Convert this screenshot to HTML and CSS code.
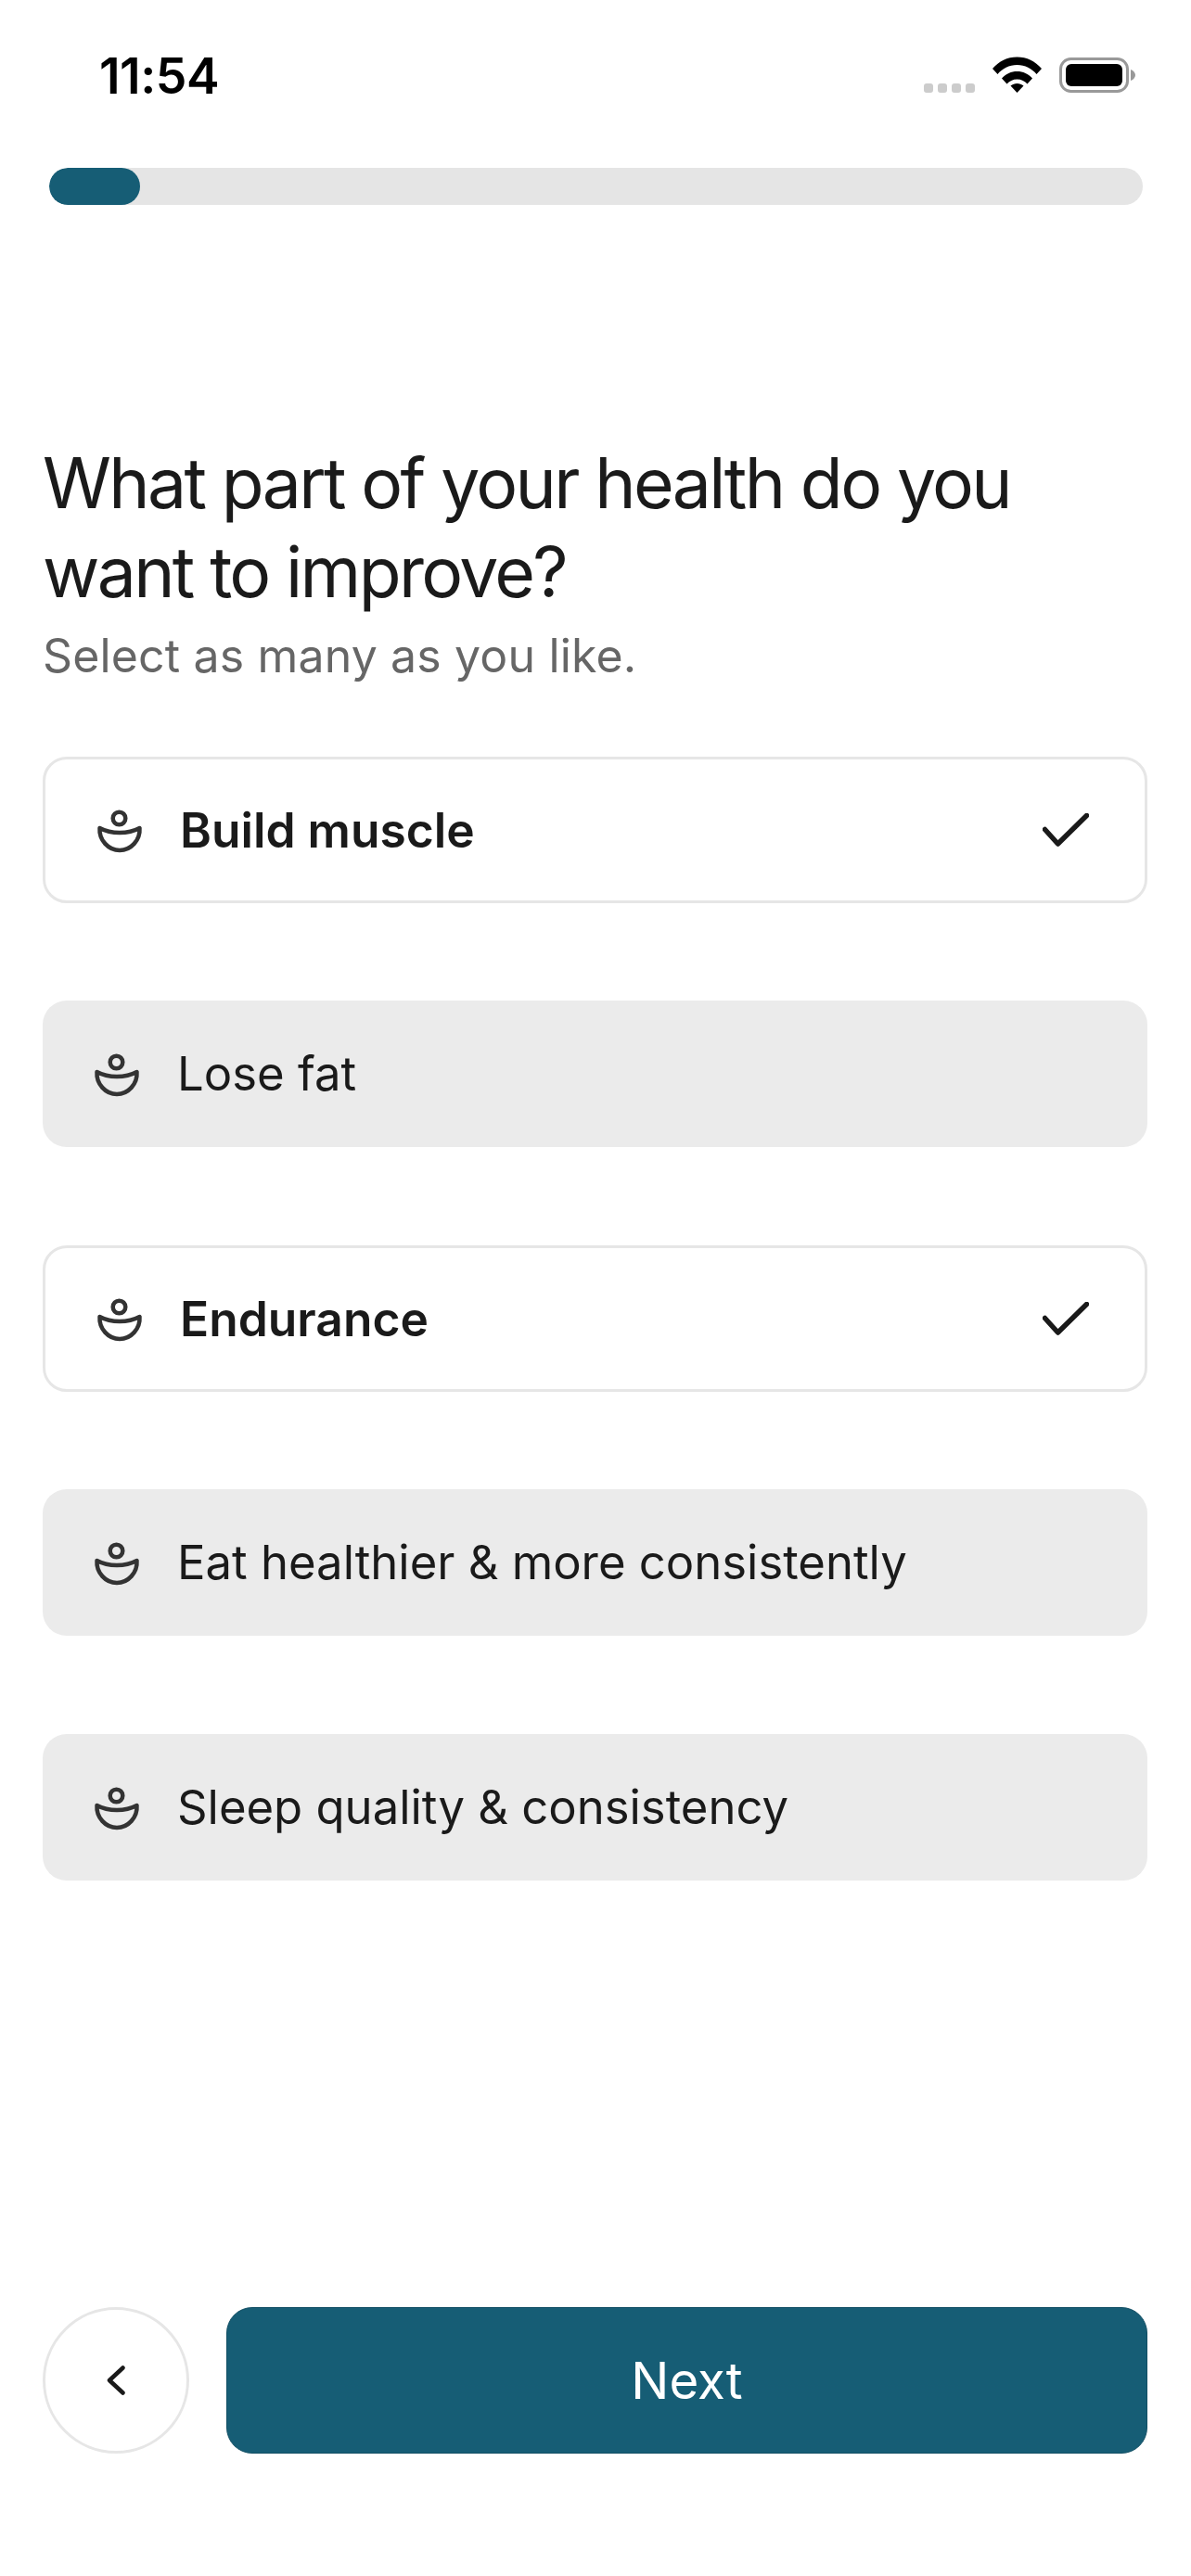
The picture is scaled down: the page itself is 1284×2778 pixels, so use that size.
FILE: index.html
```html
<!DOCTYPE html>
<html lang="en">
<head>
<meta charset="utf-8">
<title>Health goals</title>
<link rel="stylesheet" href="styles.css">
</head>
<body>
<main class="screen">
  <header class="status">
    <span class="time">11:54</span>
    <div class="status-icons">
      <div class="dots"><i></i><i></i><i></i><i></i></div>
      <svg class="wifi" viewBox="0 0 53 39"><path d="M0 13C7 5 16 .5 26.500 .5S46 5 53 13L47.500 19C42.500 13 35 9 26.500 9S10.500 13 5.500 19Z"/><path d="M10 23.500C14.500 18.500 20 16 26.500 16S38.500 18.500 43 23.500L37.500 29.500C35 26.500 31 24.500 26.500 24.500S18 26.500 15.500 29.500Z"/><path d="M19.500 31.500C21.500 30 24 29 26.500 29S31.500 30 33.500 31.500L26.500 39Z"/></svg>
      <svg class="battery" viewBox="0 0 82 38"><rect x="1.500" y="1.500" width="72" height="35" rx="11" fill="none" stroke="#999" stroke-width="3"/><rect x="7" y="7" width="61" height="24" rx="6" fill="#000"/><path d="M77 13C80 14 82 16.500 82 19S80 24 77 25Z" fill="#999"/></svg>
    </div>
  </header>

  <div class="progress"><div class="progress-fill"></div></div>

  <h1 class="title">What part of your health do you want to improve?</h1>
  <p class="subtitle">Select as many as you like.</p>

  <ul class="options">
    <li class="option selected">
      <svg class="opt-icon" viewBox="0 0 50 50"><circle cx="24.500" cy="12.500" r="6.800"/><path d="M3.500 23C10 26.500 17 28 25 28S40 26.500 46.500 23C47.500 36 37 47 25 47S2.500 36 3.500 23Z"/></svg>
      <span class="opt-label">Build muscle</span>
      <svg class="check" viewBox="0 0 50 36"><path d="M2.500 17.500L16.500 33L47.500 2.500"/></svg>
    </li>
    <li class="option">
      <svg class="opt-icon" viewBox="0 0 50 50"><circle cx="24.500" cy="12.500" r="6.800"/><path d="M3.500 23C10 26.500 17 28 25 28S40 26.500 46.500 23C47.500 36 37 47 25 47S2.500 36 3.500 23Z"/></svg>
      <span class="opt-label">Lose fat</span>
    </li>
    <li class="option selected">
      <svg class="opt-icon" viewBox="0 0 50 50"><circle cx="24.500" cy="12.500" r="6.800"/><path d="M3.500 23C10 26.500 17 28 25 28S40 26.500 46.500 23C47.500 36 37 47 25 47S2.500 36 3.500 23Z"/></svg>
      <span class="opt-label">Endurance</span>
      <svg class="check" viewBox="0 0 50 36"><path d="M2.500 17.500L16.500 33L47.500 2.500"/></svg>
    </li>
    <li class="option">
      <svg class="opt-icon" viewBox="0 0 50 50"><circle cx="24.500" cy="12.500" r="6.800"/><path d="M3.500 23C10 26.500 17 28 25 28S40 26.500 46.500 23C47.500 36 37 47 25 47S2.500 36 3.500 23Z"/></svg>
      <span class="opt-label">Eat healthier &amp; more consistently</span>
    </li>
    <li class="option">
      <svg class="opt-icon" viewBox="0 0 50 50"><circle cx="24.500" cy="12.500" r="6.800"/><path d="M3.500 23C10 26.500 17 28 25 28S40 26.500 46.500 23C47.500 36 37 47 25 47S2.500 36 3.500 23Z"/></svg>
      <span class="opt-label">Sleep quality &amp; consistency</span>
    </li>
  </ul>

  <footer class="actions">
    <button class="back" type="button" aria-label="Back"><svg class="chevron" viewBox="0 0 20 32"><path d="M17.500 2.500L3 16L17.500 29.500"/></svg></button>
    <button class="next" type="button">Next</button>
  </footer>
</main>
</body>
</html>
```

FILE: styles.css
```css
* { box-sizing: border-box; }
html, body { margin: 0; padding: 0; background: #fff; }
body { font-family: Inter, "Liberation Sans", sans-serif; color: #1a1a1a; }

.screen {
  width: 1284px;
  height: 2778px;
  padding: 0 47px 132px 46px;
  display: flex;
  flex-direction: column;
  overflow: hidden;
}

.status {
  height: 181px;
  flex: none;
  display: flex;
  align-items: flex-start;
  justify-content: space-between;
  padding: 61px 13px 0 61px;
}
.time { font-family: Inter, sans-serif; font-size: 53.500px; line-height: 42px; font-weight: 600; color: #000; letter-spacing: -0.5px; }
.status-icons { display: flex; align-items: flex-start; }
.dots { display: flex; gap: 5px; margin: 29px 19px 0 0; }
.dots i { width: 10px; height: 10px; border-radius: 3px; background: #ccc; }
.wifi { width: 53px; height: 39px; fill: #000; margin-right: 19px; }
.battery { width: 82px; height: 38px; margin-top: 1px; }

.progress { height: 40px; flex: none; margin: 0 5px 0 7px; background: #e5e5e5; border-radius: 20px; overflow: hidden; }
.progress-fill { width: 98px; height: 100%; background: #165d75; border-radius: 20px; }

.title { margin: 252px 0 0; font-size: 75px; line-height: 96px; font-weight: 400; letter-spacing: -2.65px; color: #1a1a1a; }
.subtitle { margin: 12px 0 0; font-size: 50px; line-height: 60px; letter-spacing: 0.15px; color: #666; }

.options { list-style: none; margin: 79px 0 0; padding: 0; display: flex; flex-direction: column; gap: 105.400px; }
.option {
  height: 158px;
  display: flex;
  align-items: center;
  padding: 0 60px 0 55px;
  background: #ebebeb;
  border-radius: 26px;
}
.option.selected { background: #fff; border: 3px solid #e6e6e6; }
.opt-icon { width: 50px; height: 50px; flex: none; fill: none; stroke: #333; stroke-width: 4.500; stroke-linejoin: round; margin-right: 40px; }
.opt-label { font-size: 50.800px; line-height: 60px; }
.selected .opt-label { font-size: 51.500px; font-weight: 600; }
.check { width: 50px; height: 36px; margin-left: auto; fill: none; stroke: #1a1a1a; stroke-width: 5.500; stroke-linecap: round; stroke-linejoin: round; }

.actions { margin-top: auto; display: flex; gap: 40px; }
.back {
  width: 158px; height: 158px; flex: none; padding: 0;
  display: flex; align-items: center; justify-content: center;
  border: 3px solid #e6e6e6; border-radius: 50%; background: #fff;
}
.chevron { width: 20px; height: 32px; fill: none; stroke: #1a1a1a; stroke-width: 4.500; stroke-linecap: round; stroke-linejoin: round; }
.next {
  flex: 1; height: 158px; border: 1px solid #134f64; border-radius: 28px; background: #165d75;
  color: #fff; font-family: Inter, "Liberation Sans", sans-serif; font-size: 54.500px; font-weight: 400;
}
```
